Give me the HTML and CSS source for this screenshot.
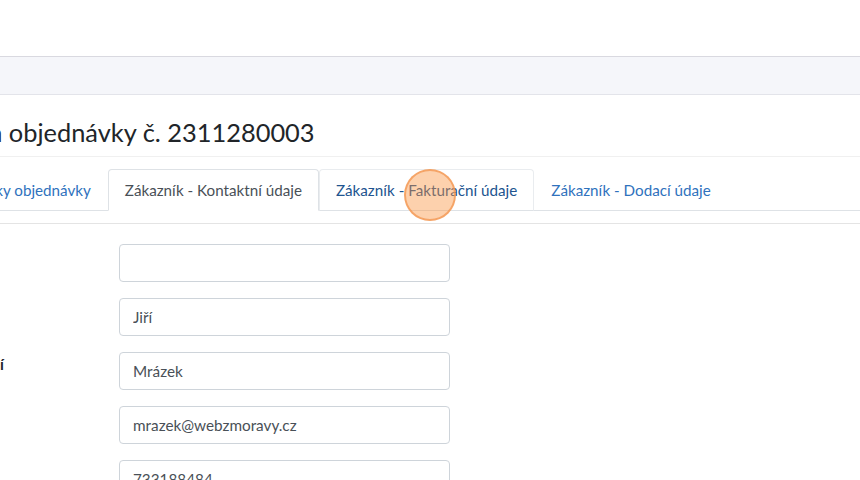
FILE: index.html
```html
<!DOCTYPE html>
<html lang="cs">
<head>
    <meta charset="UTF-8">
    <meta name="viewport" content="width=device-width, initial-scale=1.0">
    <title>Úprava objednávky</title>
    <link rel="stylesheet" href="styles.css">
</head>
<body>
    <header class="topbar"></header>
    <div class="toolbar"></div>

    <main class="page">
        <h1 class="page-title">Úprava objednávky č. 2311280003</h1>

        <ul class="tabs">
            <li><a class="tab" href="#">Položky objednávky</a></li>
            <li><a class="tab active" href="#">Zákazník - Kontaktní údaje</a></li>
            <li><a class="tab hover" href="#">Zákazník - Fakturační údaje</a></li>
            <li><a class="tab" href="#">Zákazník - Dodací údaje</a></li>
        </ul>

        <div class="tab-content">
            <form class="form">
                <div class="form-row">
                    <label class="form-label">Titul</label>
                    <input class="form-input" type="text" value="">
                </div>
                <div class="form-row">
                    <label class="form-label">Jméno</label>
                    <input class="form-input" type="text" value="Jiří">
                </div>
                <div class="form-row">
                    <label class="form-label">Příjmení</label>
                    <input class="form-input" type="text" value="Mrázek">
                </div>
                <div class="form-row">
                    <label class="form-label">E-mail</label>
                    <input class="form-input" type="text" value="mrazek@webzmoravy.cz">
                </div>
                <div class="form-row">
                    <label class="form-label">Telefon</label>
                    <input class="form-input" type="text" value="733188484">
                </div>
            </form>
        </div>
    </main>

    <!-- značka kliknutí -->
    <span class="click-marker"></span>
</body>
</html>
```

FILE: styles.css
```css
* {
    margin: 0;
    padding: 0;
    box-sizing: border-box;
}

html, body {
    width: 100%;
    height: 100%;
    overflow: hidden;
}

body {
    position: relative;
    font-family: "Lato", "Liberation Sans", sans-serif;
    font-size: 15.2px;
    color: #212529;
    background-color: #ffffff;
}

.topbar {
    height: 57px;
    border-bottom: 1px solid #d9d9e0;
}

.toolbar {
    height: 38px;
    background-color: #f5f6fa;
    border-bottom: 1px solid #e3e4ea;
}

.page {
    margin-left: -77px;
    width: 1000px;
}

.page-title {
    font-size: 25.4px;
    font-weight: 400;
    line-height: 1.2;
    padding: 22px 0 9px;
    border-bottom: 1px solid #f0f0f0;
}

.tabs {
    list-style: none;
    display: flex;
    margin-top: 12px;
    padding-left: 19px;
    border-bottom: 1px solid #dee2e6;
}

.tab {
    display: block;
    padding: 9px 16px;
    margin-bottom: -1px;
    line-height: 22px;
    color: #2f72bd;
    text-decoration: none;
    border: 1px solid transparent;
    border-top-left-radius: 4px;
    border-top-right-radius: 4px;
}

.tab.active {
    color: #495057;
    background-color: #ffffff;
    border-color: #dee2e6 #dee2e6 #ffffff;
}

.tab.hover {
    color: #21548f;
    border-color: #e9ecef #e9ecef #dee2e6;
}

.tab-content {
    margin-top: 12px;
    border-top: 1px solid #e4e4e4;
    padding-top: 20px;
}

.form-row {
    display: flex;
    align-items: flex-start;
    margin-bottom: 16px;
}

.form-label {
    width: 196px;
    padding: 1px 0 0 25px;
    font-weight: 700;
    line-height: 22px;
}

.form-input {
    width: 331px;
    height: 38px;
    padding: 0 13px;
    font-family: inherit;
    font-size: 15.3px;
    color: #495057;
    border: 1px solid #ced4da;
    border-radius: 4px;
    background-color: #ffffff;
}

.click-marker {
    position: absolute;
    left: 404px;
    top: 169px;
    width: 52px;
    height: 52px;
    border-radius: 50%;
    background-color: rgba(251, 146, 60, 0.42);
    border: 2px solid rgba(243, 150, 80, 0.75);
}
```
